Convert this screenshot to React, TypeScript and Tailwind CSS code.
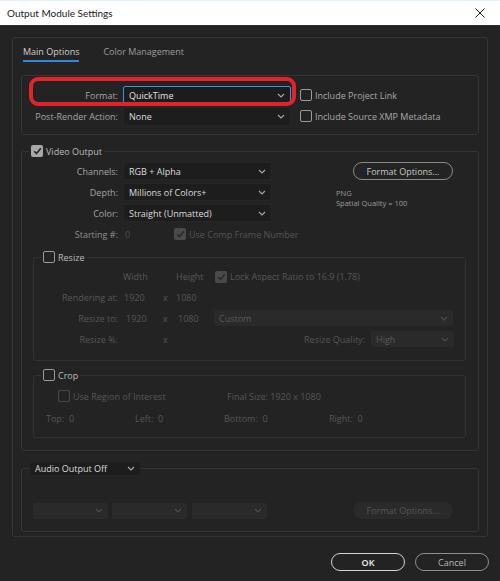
import React from "react";

// small chevron used in every dropdown
function Chevron({ dim = false }: { dim?: boolean }) {
  return (
    <svg width="8" height="5" viewBox="0 0 8 5" className="shrink-0">
      <path d="M1 1l3 3 3-3" fill="none" stroke={dim ? "#4e4e4e" : "#a9a9a9"} strokeWidth="1.1" />
    </svg>
  );
}

function Select({
  value,
  className = "",
  focus = false,
  disabled = false,
}: {
  value: string;
  className?: string;
  focus?: boolean;
  disabled?: boolean;
}) {
  const tone = focus
    ? "bg-[#1c1c1c] border border-[#3d8fe0] text-[#e2e2e2]"
    : disabled
    ? "bg-[#2a2a2a] text-[#5a5a5a]"
    : "bg-[#1d1d1d] border border-[#262626] text-[#dcdcdc]";
  return (
    <div className={`shrink-0 flex items-center justify-between rounded-[2px] pl-[5px] pr-[5px] ${tone} ${className}`}>
      <span className="leading-[13px] whitespace-nowrap">{value}</span>
      <Chevron dim={disabled} />
    </div>
  );
}

function Check({ checked = false, disabled = false }: { checked?: boolean; disabled?: boolean }) {
  if (checked) {
    return (
      <span
        className={`w-[12px] h-[12px] rounded-[2px] grid place-items-center shrink-0 ${
          disabled ? "bg-[#4a4a4a]" : "bg-[#a8a8a8]"
        }`}
      >
        <svg width="9" height="8" viewBox="0 0 9 8">
          <path d="M1.2 4.2l2.3 2.3L7.8 1.3" fill="none" stroke={disabled ? "#2a2a2a" : "#262626"} strokeWidth="1.6" />
        </svg>
      </span>
    );
  }
  return (
    <span
      className={`w-[12px] h-[12px] rounded-[2px] border-[1.5px] shrink-0 ${
        disabled ? "border-[#4a4a4a]" : "border-[#9a9a9a]"
      }`}
    />
  );
}

export default function App() {
  return (
    <div className="w-[500px] h-[581px] bg-[#232323] relative overflow-hidden font-['Open_Sans','Liberation_Sans',sans-serif] text-[9px] leading-[13px] whitespace-nowrap">
      {/* title bar */}
      <div className="h-[26px] bg-white border-t border-[#dff2fa] border-b border-b-[#2c2c2c] flex items-center justify-between pl-[7px] pr-[15px] text-[10px] text-[#1a1a1a] font-['Lato','Noto_Sans',sans-serif]">
        <span>Output Module Settings</span>
        <svg width="10" height="10" viewBox="0 0 10 10">
          <path d="M0.5 0.5l9 9M9.5 0.5l-9 9" stroke="#222" strokeWidth="1" />
        </svg>
      </div>

      <div className="px-[12px] pt-[11px]">
        <div className="h-[500px] border border-[#353535] rounded-[3px] px-[8px]">
          {/* tabs */}
          <div className="h-[37px] flex items-start pt-[7px] pl-[2px] gap-[24px]">
            <div className="pb-[2px] border-b-2 border-[#2f86dc] text-[#d0d0d0]">Main Options</div>
            <div className="text-[#9d9d9d]">Color Management</div>
          </div>

          {/* format group */}
          <div className="h-[60px] border border-[#353535] rounded-[3px] pt-[10px] flex flex-col gap-[3px]">
            <div className="flex items-center h-[18px]">
              <span className="w-[96px] shrink-0 text-right text-[#a3a3a3]">Format:</span>
              <Select value="QuickTime" focus className="ml-[5px] w-[168px] h-[19px]" />
              <span className="ml-[9px] flex items-center gap-[3px] text-[#a8a8a8]">
                <Check />
                Include Project Link
              </span>
            </div>
            <div className="flex items-center h-[18px]">
              <span className="w-[96px] shrink-0 text-right text-[#a3a3a3]">Post-Render Action:</span>
              <Select value="None" className="ml-[5px] w-[168px] h-[19px]" />
              <span className="ml-[9px] flex items-center gap-[3px] text-[#a8a8a8]">
                <Check />
                Include Source XMP Metadata
              </span>
            </div>
          </div>

          {/* video output */}
          <fieldset className="mt-[9px] border border-[#353535] rounded-[3px] pb-[12px]">
            <legend className="ml-[7px] px-[2px] h-[14px] flex items-center gap-[3px] text-[#bdbdbd]">
              <Check checked />
              Video Output
            </legend>
            <div className="flex pt-[4px]">
              <div className="w-[251px] shrink-0 flex flex-col gap-[3px]">
                {[
                  ["Channels:", "RGB + Alpha"],
                  ["Depth:", "Millions of Colors+"],
                  ["Color:", "Straight (Unmatted)"],
                ].map(([l, v]) => (
                  <div key={l} className="flex items-center h-[18px]">
                    <span className="w-[96px] shrink-0 text-right text-[#a3a3a3]">{l}</span>
                    <Select value={v} className="ml-[5px] w-[149px] h-[18px]" />
                  </div>
                ))}
                <div className="flex items-center h-[18px]">
                  <span className="w-[96px] shrink-0 text-right text-[#8f8f8f]">Starting #:</span>
                  <span className="ml-[7px] w-[6px] shrink-0 text-[#4f4f4f]">0</span>
                  <span className="ml-[43px] shrink-0 flex items-center gap-[3px] text-[#555]">
                    <Check checked disabled />
                    Use Comp Frame Number
                  </span>
                </div>
              </div>
              <div className="ml-[63px] w-[117px] shrink-0 flex flex-col">
                <div className="ml-[17px] w-[100px] h-[18px] rounded-full border-[1.5px] border-[#8a8a8a] grid place-items-center text-[#c8c8c8]">
                  Format Options...
                </div>
                <div className="mt-[8px] text-[7.5px] leading-[10px] text-[#9a9a9a]">
                  <div>PNG</div>
                  <div>Spatial Quality = 100</div>
                </div>
              </div>
            </div>

            {/* resize */}
            <fieldset className="mt-[7px] ml-[11px] mr-[12px] border border-[#313131] rounded-[3px] pt-[4px] pb-[12px] text-[#575757]">
              <legend className="ml-[7px] px-[2px] h-[14px] flex items-center gap-[3px] text-[#bdbdbd]">
                <Check />
                Resize
              </legend>
              <div className="flex flex-col gap-[3px]">
                <div className="flex items-center h-[17px]">
                  <span className="w-[84px] shrink-0" />
                  <span className="ml-[5px] w-[53px] shrink-0">Width</span>
                  <span className="w-[39px] shrink-0">Height</span>
                  <span className="flex items-center gap-[3px]">
                    <Check checked disabled />
                    Lock Aspect Ratio to 16:9 (1.78)
                  </span>
                </div>
                <div className="flex items-center h-[18px]">
                  <span className="w-[84px] shrink-0 text-right">Rendering at:</span>
                  <span className="ml-[6px] w-[39px] shrink-0">1920</span>
                  <span className="w-[13px] shrink-0">x</span>
                  <span className="w-[38px] shrink-0">1080</span>
                </div>
                <div className="flex items-center h-[18px]">
                  <span className="w-[84px] shrink-0 text-right">Resize to:</span>
                  <span className="ml-[8px] w-[37px] shrink-0">1920</span>
                  <span className="w-[13px] shrink-0">x</span>
                  <span className="ml-[2px] w-[36px] shrink-0">1080</span>
                  <Select value="Custom" disabled className="w-[239px] h-[16px]" />
                </div>
                <div className="flex items-center h-[18px]">
                  <span className="w-[84px] shrink-0 text-right">Resize %:</span>
                  <span className="ml-[45px] w-[13px] shrink-0">x</span>
                  <span className="ml-auto text-right">Resize Quality:</span>
                  <Select value="High" disabled className="ml-[6px] mr-[11px] w-[83px] h-[16px]" />
                </div>
              </div>
            </fieldset>

            {/* crop */}
            <fieldset className="mt-[7px] ml-[11px] mr-[12px] border border-[#313131] rounded-[3px] pt-[5px] pb-[10px] text-[#575757]">
              <legend className="ml-[7px] px-[2px] h-[14px] flex items-center gap-[3px] text-[#bdbdbd]">
                <Check />
                Crop
              </legend>
              <div className="flex flex-col gap-[4px]">
                <div className="flex items-center h-[18px] pl-[24px]">
                  <span className="w-[169px] shrink-0 flex items-center gap-[3px]">
                    <Check disabled />
                    Use Region of Interest
                  </span>
                  <span>Final Size: 1920 x 1080</span>
                </div>
                <div className="flex items-center h-[18px] pl-[12px]">
                  <span className="w-[89px] shrink-0">Top:&nbsp;&nbsp;0</span>
                  <span className="w-[89px] shrink-0">Left:&nbsp;&nbsp;0</span>
                  <span className="w-[105px] shrink-0">Bottom:&nbsp;&nbsp;0</span>
                  <span>Right:&nbsp;&nbsp;0</span>
                </div>
              </div>
            </fieldset>
          </fieldset>

          {/* audio */}
          <fieldset className="mt-[10px] border border-[#353535] rounded-[3px] pt-[26px] pb-[12px]">
            <legend className="ml-[7px] h-[15px] flex">
              <Select value="Audio Output Off" className="w-[112px] h-[15px]" />
            </legend>
            <div className="flex items-center pl-[11px]">
              <Select value="" disabled className="w-[75px] h-[16px]" />
              <Select value="" disabled className="ml-[4px] w-[75px] h-[16px]" />
              <Select value="" disabled className="ml-[5px] w-[75px] h-[16px]" />
              <div className="ml-[86px] w-[100px] h-[17px] rounded-full bg-[#2a2a2a] grid place-items-center text-[#555]">
                Format Options...
              </div>
            </div>
          </fieldset>
        </div>
      </div>

      {/* bottom buttons */}
      <div className="flex justify-end gap-[10px] pr-[11px] mt-[16px]">
        <div className="w-[74px] h-[18px] rounded-full border-[1.5px] border-[#d4d4d4] grid place-items-center text-[#f0f0f0] font-semibold">
          OK
        </div>
        <div className="w-[74px] h-[18px] rounded-full border-[1.5px] border-[#8e8e8e] grid place-items-center text-[#b8b8b8]">
          Cancel
        </div>
      </div>

      {/* red annotation around the Format row */}
      <div className="absolute left-[29px] top-[77px] w-[267px] h-[29px] border-[4px] border-[#e3232a] rounded-[9px] pointer-events-none" />
    </div>
  );
}
